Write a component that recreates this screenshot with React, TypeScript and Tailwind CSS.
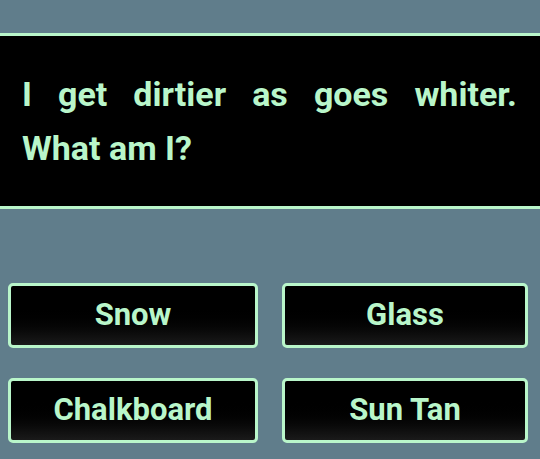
import React from "react";

const answers = ["Snow", "Glass", "Chalkboard", "Sun Tan"];

export default function App() {
  return (
    <div
      className="w-[540px] h-[459px] bg-[#607d8b] overflow-hidden"
      style={{ fontFamily: "Roboto, 'Liberation Sans', sans-serif" }}
    >
      <div className="pt-[33px]">
        <div className="h-[176px] bg-black border-y-[3px] border-[#b9f6ca] flex flex-col justify-center pl-[22px] pr-[23px] text-[34px] leading-[54px] font-bold text-[#b9f6ca]">
          <p className="text-justify [text-align-last:justify]">I get dirtier as goes whiter.</p>
          <p>What am I?</p>
        </div>
      </div>
      <div className="grid grid-cols-[250px_246px] gap-x-[24px] gap-y-[30px] pl-[8px] pt-[74px]">
        {answers.map((a) => (
          <div
            key={a}
            className="h-[65px] rounded-[5px] border-[3px] border-[#b9f6ca] bg-gradient-to-b from-[#000000] from-30% to-[#1a1a1a] flex items-center justify-center text-[31px] font-bold text-[#b9f6ca]"
          >
            {a}
          </div>
        ))}
      </div>
    </div>
  );
}
